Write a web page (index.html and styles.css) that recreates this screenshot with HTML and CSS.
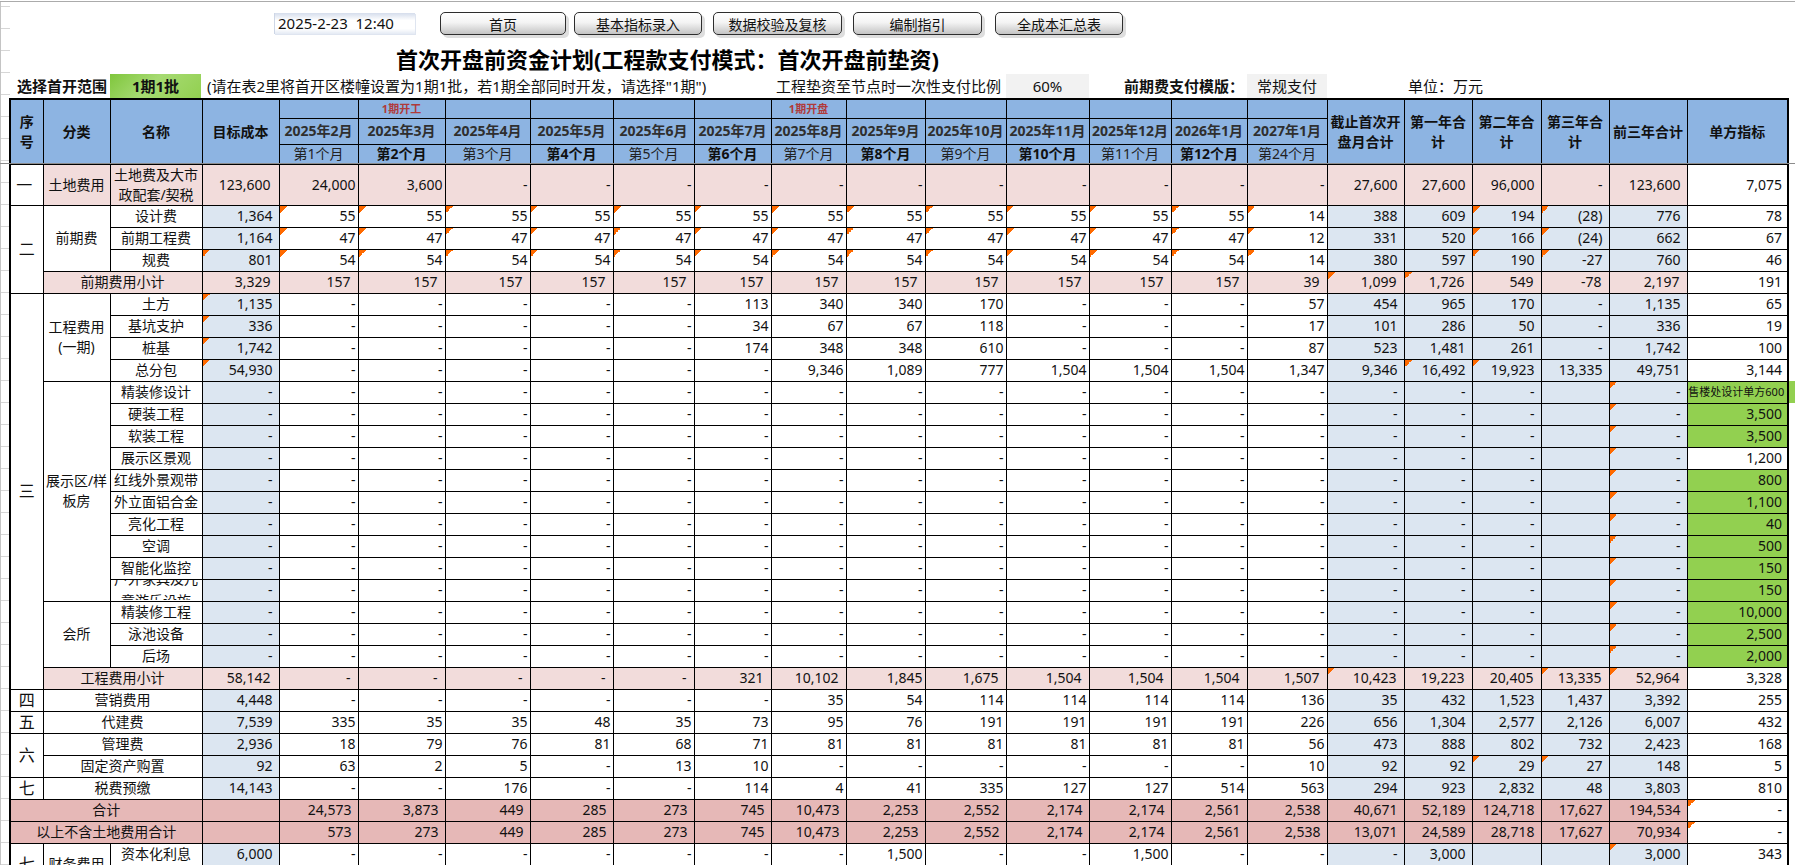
FILE: index.html
```html
<!DOCTYPE html>
<html lang="zh-CN">
<head>
<meta charset="utf-8">
<title>首次开盘前资金计划</title>
<link rel="stylesheet" href="styles.css">
</head>
<body>
<div class="ruler"></div>
<div class="pane-line"></div>
<div class="sheet">
<div class="gutter"></div>
<main class="main">
<div class="toolbar">
<div class="datebox">2025-2-23  12:40</div>
<button class="btn w1">首页</button>
<button class="btn w2">基本指标录入</button>
<button class="btn w3">数据校验及复核</button>
<button class="btn w3">编制指引</button>
<button class="btn w4">全成本汇总表</button>
</div>
<h1 class="title">首次开盘前资金计划(工程款支付模式：首次开盘前垫资)</h1>
<div class="info">
<div class="strong center">选择首开范围</div>
<div class="pick strong center">1期1批</div>
<div class="note">(请在表2里将首开区楼幢设置为1期1批，若1期全部同时开发，请选择"1期")</div>
<div>工程垫资至节点时一次性支付比例</div>
<div class="gray center">60%</div>
<div class="strong end">前期费支付模版：</div>
<div class="gray center">常规支付</div>
<div class="unit">单位：万元</div>
</div>
<table class="grid">
<colgroup><col><col><col><col><col><col><col><col><col><col><col><col><col><col><col><col><col><col><col><col><col><col><col></colgroup>
<thead>
<tr class="h1"><th rowspan="3">序<br>号</th><th rowspan="3">分类</th><th rowspan="3">名称</th><th rowspan="3">目标成本</th><th></th><th class="mark">1期开工</th><th></th><th></th><th></th><th></th><th class="mark">1期开盘</th><th></th><th></th><th></th><th></th><th></th><th></th><th rowspan="3">截止首次开盘月合计</th><th rowspan="3">第一年合计</th><th rowspan="3">第二年合计</th><th rowspan="3">第三年合计</th><th rowspan="3">前三年合计</th><th rowspan="3">单方指标</th></tr>
<tr class="h2"><th class="ym">2025年2月</th><th class="ym">2025年3月</th><th class="ym">2025年4月</th><th class="ym">2025年5月</th><th class="ym">2025年6月</th><th class="ym">2025年7月</th><th class="ym">2025年8月</th><th class="ym">2025年9月</th><th class="ym">2025年10月</th><th class="ym">2025年11月</th><th class="ym">2025年12月</th><th class="ym">2026年1月</th><th class="ym">2027年1月</th></tr>
<tr class="h3"><th class="nb">第1个月</th><th>第2个月</th><th class="nb">第3个月</th><th>第4个月</th><th class="nb">第5个月</th><th>第6个月</th><th class="nb">第7个月</th><th>第8个月</th><th class="nb">第9个月</th><th>第10个月</th><th class="nb">第11个月</th><th>第12个月</th><th class="nb">第24个月</th></tr>
</thead>
<tbody>
<tr class="land tall"><td class="c w idx">一</td><td class="c">土地费用</td><td class="c">土地费及大市政配套/契税</td><td class="a">123,600</td><td>24,000</td><td>3,600</td><td>-</td><td>-</td><td>-</td><td>-</td><td>-</td><td>-</td><td>-</td><td>-</td><td>-</td><td>-</td><td>-</td><td class="k">27,600</td><td class="k">27,600</td><td class="k">96,000</td><td class="k">-</td><td class="k">123,600</td><td class="w">7,075</td></tr>

<tr><td rowspan="4" class="c idx">二</td><td rowspan="3" class="c">前期费</td><td class="c">设计费</td><td class="a b">1,364</td><td class="t">55</td><td class="t">55</td><td class="t">55</td><td class="t">55</td><td class="t">55</td><td class="t">55</td><td class="t">55</td><td class="t">55</td><td class="t">55</td><td class="t">55</td><td class="t">55</td><td class="t">55</td><td class="t">14</td><td class="b">388</td><td class="b">609</td><td class="b t">194</td><td class="b t">(28)</td><td class="b">776</td><td class="w">78</td></tr>
<tr><td class="c">前期工程费</td><td class="a b">1,164</td><td class="t">47</td><td class="t">47</td><td class="t">47</td><td class="t">47</td><td class="t">47</td><td class="t">47</td><td class="t">47</td><td class="t">47</td><td class="t">47</td><td class="t">47</td><td class="t">47</td><td class="t">47</td><td class="t">12</td><td class="b">331</td><td class="b">520</td><td class="b t">166</td><td class="b t">(24)</td><td class="b">662</td><td class="w">67</td></tr>
<tr><td class="c">规费</td><td class="a b t">801</td><td class="t">54</td><td class="t">54</td><td class="t">54</td><td class="t">54</td><td class="t">54</td><td class="t">54</td><td class="t">54</td><td class="t">54</td><td class="t">54</td><td class="t">54</td><td class="t">54</td><td class="t">54</td><td class="t">14</td><td class="b">380</td><td class="b">597</td><td class="b t">190</td><td class="b t">-27</td><td class="b">760</td><td class="w">46</td></tr>
<tr class="sub"><td colspan="2" class="c">前期费用小计</td><td class="a">3,329</td><td>157</td><td>157</td><td>157</td><td>157</td><td>157</td><td>157</td><td>157</td><td>157</td><td>157</td><td>157</td><td>157</td><td>157</td><td>39</td><td class="t">1,099</td><td class="t">1,726</td><td>549</td><td>-78</td><td>2,197</td><td class="w">191</td></tr>

<tr><td rowspan="18" class="c idx">三</td><td rowspan="4" class="c">工程费用<br>(一期)</td><td class="c">土方</td><td class="a b t">1,135</td><td>-</td><td>-</td><td>-</td><td>-</td><td>-</td><td>113</td><td>340</td><td>340</td><td>170</td><td>-</td><td>-</td><td>-</td><td>57</td><td class="b">454</td><td class="b">965</td><td class="b">170</td><td class="b">-</td><td class="b">1,135</td><td class="w">65</td></tr>
<tr><td class="c">基坑支护</td><td class="a b t">336</td><td>-</td><td>-</td><td>-</td><td>-</td><td>-</td><td>34</td><td>67</td><td>67</td><td>118</td><td>-</td><td>-</td><td>-</td><td>17</td><td class="b">101</td><td class="b">286</td><td class="b">50</td><td class="b">-</td><td class="b">336</td><td class="w">19</td></tr>
<tr><td class="c">桩基</td><td class="a b t">1,742</td><td>-</td><td>-</td><td>-</td><td>-</td><td>-</td><td>174</td><td>348</td><td>348</td><td>610</td><td>-</td><td>-</td><td>-</td><td>87</td><td class="b">523</td><td class="b">1,481</td><td class="b">261</td><td class="b">-</td><td class="b">1,742</td><td class="w">100</td></tr>
<tr><td class="c">总分包</td><td class="a b t">54,930</td><td>-</td><td>-</td><td>-</td><td>-</td><td>-</td><td>-</td><td>9,346</td><td>1,089</td><td>777</td><td>1,504</td><td>1,504</td><td>1,504</td><td>1,347</td><td class="b">9,346</td><td class="b t">16,492</td><td class="b t">19,923</td><td class="b">13,335</td><td class="b">49,751</td><td class="w">3,144</td></tr>

<tr><td rowspan="10" class="c">展示区/样<br>板房</td><td class="c">精装修设计</td><td class="a b">-</td><td>-</td><td>-</td><td>-</td><td>-</td><td>-</td><td>-</td><td>-</td><td>-</td><td>-</td><td>-</td><td>-</td><td>-</td><td>-</td><td class="b">-</td><td class="b">-</td><td class="b">-</td><td class="b"></td><td class="b t">-</td><td class="g spill">售楼处设计单方600</td></tr>
<tr><td class="c">硬装工程</td><td class="a b">-</td><td>-</td><td>-</td><td>-</td><td>-</td><td>-</td><td>-</td><td>-</td><td>-</td><td>-</td><td>-</td><td>-</td><td>-</td><td>-</td><td class="b">-</td><td class="b">-</td><td class="b">-</td><td class="b"></td><td class="b t">-</td><td class="g">3,500</td></tr>
<tr><td class="c">软装工程</td><td class="a b">-</td><td>-</td><td>-</td><td>-</td><td>-</td><td>-</td><td>-</td><td>-</td><td>-</td><td>-</td><td>-</td><td>-</td><td>-</td><td>-</td><td class="b">-</td><td class="b">-</td><td class="b">-</td><td class="b"></td><td class="b t">-</td><td class="g">3,500</td></tr>
<tr><td class="c">展示区景观</td><td class="a b">-</td><td>-</td><td>-</td><td>-</td><td>-</td><td>-</td><td>-</td><td>-</td><td>-</td><td>-</td><td>-</td><td>-</td><td>-</td><td>-</td><td class="b">-</td><td class="b">-</td><td class="b">-</td><td class="b"></td><td class="b t">-</td><td class="w">1,200</td></tr>
<tr><td class="c">红线外景观带</td><td class="a b">-</td><td>-</td><td>-</td><td>-</td><td>-</td><td>-</td><td>-</td><td>-</td><td>-</td><td>-</td><td>-</td><td>-</td><td>-</td><td>-</td><td class="b">-</td><td class="b">-</td><td class="b">-</td><td class="b"></td><td class="b t">-</td><td class="g">800</td></tr>
<tr><td class="c">外立面铝合金</td><td class="a b">-</td><td>-</td><td>-</td><td>-</td><td>-</td><td>-</td><td>-</td><td>-</td><td>-</td><td>-</td><td>-</td><td>-</td><td>-</td><td>-</td><td class="b">-</td><td class="b">-</td><td class="b">-</td><td class="b"></td><td class="b t">-</td><td class="g">1,100</td></tr>
<tr><td class="c">亮化工程</td><td class="a b">-</td><td>-</td><td>-</td><td>-</td><td>-</td><td>-</td><td>-</td><td>-</td><td>-</td><td>-</td><td>-</td><td>-</td><td>-</td><td>-</td><td class="b">-</td><td class="b">-</td><td class="b">-</td><td class="b"></td><td class="b t">-</td><td class="g">40</td></tr>
<tr><td class="c">空调</td><td class="a b">-</td><td>-</td><td>-</td><td>-</td><td>-</td><td>-</td><td>-</td><td>-</td><td>-</td><td>-</td><td>-</td><td>-</td><td>-</td><td>-</td><td class="b">-</td><td class="b">-</td><td class="b">-</td><td class="b"></td><td class="b t">-</td><td class="g">500</td></tr>
<tr><td class="c">智能化监控</td><td class="a b">-</td><td>-</td><td>-</td><td>-</td><td>-</td><td>-</td><td>-</td><td>-</td><td>-</td><td>-</td><td>-</td><td>-</td><td>-</td><td>-</td><td class="b">-</td><td class="b">-</td><td class="b">-</td><td class="b"></td><td class="b t">-</td><td class="g">150</td></tr>
<tr><td class="c"><div class="clip">户外家具及儿童游乐设施</div></td><td class="a b">-</td><td>-</td><td>-</td><td>-</td><td>-</td><td>-</td><td>-</td><td>-</td><td>-</td><td>-</td><td>-</td><td>-</td><td>-</td><td>-</td><td class="b">-</td><td class="b">-</td><td class="b">-</td><td class="b"></td><td class="b t">-</td><td class="g">150</td></tr>

<tr><td rowspan="3" class="c">会所</td><td class="c">精装修工程</td><td class="a b">-</td><td>-</td><td>-</td><td>-</td><td>-</td><td>-</td><td>-</td><td>-</td><td>-</td><td>-</td><td>-</td><td>-</td><td>-</td><td>-</td><td class="b">-</td><td class="b">-</td><td class="b">-</td><td class="b"></td><td class="b t">-</td><td class="g">10,000</td></tr>
<tr><td class="c">泳池设备</td><td class="a b">-</td><td>-</td><td>-</td><td>-</td><td>-</td><td>-</td><td>-</td><td>-</td><td>-</td><td>-</td><td>-</td><td>-</td><td>-</td><td>-</td><td class="b">-</td><td class="b">-</td><td class="b">-</td><td class="b"></td><td class="b t">-</td><td class="g">2,500</td></tr>
<tr><td class="c">后场</td><td class="a b">-</td><td>-</td><td>-</td><td>-</td><td>-</td><td>-</td><td>-</td><td>-</td><td>-</td><td>-</td><td>-</td><td>-</td><td>-</td><td>-</td><td class="b">-</td><td class="b">-</td><td class="b">-</td><td class="b"></td><td class="b t">-</td><td class="g">2,000</td></tr>
<tr class="sub"><td colspan="2" class="c">工程费用小计</td><td class="a">58,142</td><td>-</td><td>-</td><td>-</td><td>-</td><td>-</td><td>321</td><td>10,102</td><td class="tight">1,845</td><td>1,675</td><td>1,504</td><td>1,504</td><td>1,504</td><td>1,507</td><td class="t">10,423</td><td>19,223</td><td>20,405</td><td class="t">13,335</td><td class="t">52,964</td><td class="w">3,328</td></tr>

<tr><td class="c idx">四</td><td colspan="2" class="c">营销费用</td><td class="a b">4,448</td><td>-</td><td>-</td><td>-</td><td>-</td><td>-</td><td>-</td><td>35</td><td>54</td><td>114</td><td>114</td><td>114</td><td>114</td><td>136</td><td class="b">35</td><td class="b">432</td><td class="b">1,523</td><td class="b">1,437</td><td class="b">3,392</td><td class="w">255</td></tr>
<tr><td class="c idx">五</td><td colspan="2" class="c">代建费</td><td class="a b">7,539</td><td>335</td><td>35</td><td>35</td><td>48</td><td>35</td><td>73</td><td>95</td><td>76</td><td>191</td><td>191</td><td>191</td><td>191</td><td>226</td><td class="b">656</td><td class="b">1,304</td><td class="b">2,577</td><td class="b">2,126</td><td class="b">6,007</td><td class="w">432</td></tr>
<tr><td rowspan="2" class="c idx">六</td><td colspan="2" class="c">管理费</td><td class="a b">2,936</td><td>18</td><td>79</td><td>76</td><td>81</td><td>68</td><td>71</td><td>81</td><td>81</td><td>81</td><td>81</td><td>81</td><td>81</td><td>56</td><td class="b">473</td><td class="b">888</td><td class="b">802</td><td class="b">732</td><td class="b">2,423</td><td class="w">168</td></tr>
<tr><td colspan="2" class="c">固定资产购置</td><td class="a b">92</td><td>63</td><td>2</td><td>5</td><td>-</td><td>13</td><td>10</td><td>-</td><td>-</td><td>-</td><td>-</td><td>-</td><td>-</td><td>10</td><td class="b">92</td><td class="b">92</td><td class="b t">29</td><td class="b t">27</td><td class="b">148</td><td class="w">5</td></tr>
<tr><td class="c idx">七</td><td colspan="2" class="c">税费预缴</td><td class="a b">14,143</td><td>-</td><td>-</td><td>176</td><td>-</td><td>-</td><td>114</td><td>4</td><td>41</td><td>335</td><td>127</td><td>127</td><td>514</td><td>563</td><td class="b">294</td><td class="b">923</td><td class="b">2,832</td><td class="b">48</td><td class="b">3,803</td><td class="w">810</td></tr>
<tr class="tot"><td colspan="3" class="c">合计</td><td class="a"></td><td>24,573</td><td>3,873</td><td>449</td><td>285</td><td>273</td><td>745</td><td>10,473</td><td>2,253</td><td>2,552</td><td>2,174</td><td>2,174</td><td>2,561</td><td>2,538</td><td>40,671</td><td>52,189</td><td>124,718</td><td>17,627</td><td>194,534</td><td class="w t">-</td></tr>
<tr class="tot"><td colspan="3" class="c">以上不含土地费用合计</td><td class="a"></td><td>573</td><td>273</td><td>449</td><td>285</td><td>273</td><td>745</td><td>10,473</td><td>2,253</td><td>2,552</td><td>2,174</td><td>2,174</td><td>2,561</td><td>2,538</td><td>13,071</td><td>24,589</td><td>28,718</td><td>17,627</td><td>70,934</td><td class="w t">-</td></tr>
<tr><td rowspan="2" class="c idx">七</td><td rowspan="2" class="c">财务费用</td><td class="c">资本化利息</td><td class="a b">6,000</td><td>-</td><td>-</td><td>-</td><td>-</td><td>-</td><td>-</td><td>-</td><td>1,500</td><td>-</td><td>-</td><td>1,500</td><td>-</td><td>-</td><td class="b">-</td><td class="b">3,000</td><td class="b"></td><td class="b"></td><td class="b t">3,000</td><td class="w">343</td></tr>
<tr><td class="c"></td><td class="a b"></td><td></td><td></td><td></td><td></td><td></td><td></td><td></td><td></td><td></td><td></td><td></td><td></td><td></td><td class="b"></td><td class="b"></td><td class="b"></td><td class="b"></td><td class="b"></td><td class="w"></td></tr>
</tbody>
</table>
</main>
</div>
</body>
</html>
```
FILE: styles.css
```css
* { box-sizing: border-box; }
html, body { margin: 0; padding: 0; }
body {
  width: 1795px;
  height: 865px;
  overflow: hidden;
  position: relative;
  background: #fff;
  color: #111;
  font-family: "Noto Sans", "Noto Sans CJK SC", sans-serif;
  font-size: 14px;
}
.ruler { height: 2px; border-bottom: 1px solid #ababab; }
.pane-line {
  position: absolute;
  left: 0; right: 0; top: 163px;
  height: 1px;
  background: #8c8c8c;
  z-index: 2;
}
.sheet { display: flex; align-items: flex-start; height: 863px; }
.gutter {
  flex: 0 0 10px;
  height: 100%;
  border-left: 1px solid #c4c4c4;
  background: repeating-linear-gradient(#d6d6d6 0 1px, transparent 1px 22px) 0 4px;
}
.main { flex: 1; min-width: 0; }

.toolbar { display: flex; align-items: center; height: 23px; margin-top: 10px; padding-left: 264px; }
.datebox {
  width: 141px; height: 21px; margin-right: 25px;
  padding-left: 4px; font-size: 15px; line-height: 20px; white-space: pre;
  background: linear-gradient(180deg, #d5ddec 0, #fff 35%, #fff 75%, #e4eaf4 100%);
  box-shadow: inset 1px 0 0 #cdd6e6, 1px 1px 0 #dfe5f0;
}
.btn {
  height: 23px; margin-right: 8px; padding: 2px 0 0;
  border: 1px solid #2e2e2e; border-radius: 5px;
  background: linear-gradient(180deg, #fff 0, #f4f4f4 45%, #c4c4c4 100%);
  box-shadow: 3px 3px 0 #dedede;
  font: inherit; font-size: 14px; line-height: 18px; color: #111;
}
.w1 { width: 126px; }
.w2 { width: 128px; margin-right: 11px; }
.w3 { width: 129px; margin-right: 11px; }
.w4 { width: 128px; margin-left: 2px; }

.title {
  margin: 9px 0 0;
  height: 30px;
  padding-left: 386px;
  font-size: 22px; font-weight: 700; line-height: 30px; color: #000;
  white-space: nowrap;
}
.info {
  display: grid;
  grid-template-columns: 100px 91px 575px 230px 83px 158px 80px 1fr;
  height: 24px;
  font-size: 15px;
  line-height: 24px;
  white-space: nowrap;
}
.strong { font-weight: 700; }
.center { text-align: center; }
.info > .center:first-child { padding-left: 4px; }
.end { text-align: right; padding-right: 3px; }
.note { padding-left: 6px; }
.pick { background: linear-gradient(135deg, #7fc63c 0, #a6da72 45%, #92d050 100%); }
.gray { background: #f2f2f2; }
.unit { padding-left: 81px; }

.grid {
  table-layout: fixed;
  border-collapse: collapse;
  width: 1778px;
  margin-left: -1px;
  border: 2px solid #000;
  line-height: 20px;
}
col:nth-child(1) { width: 33px; }
col:nth-child(2) { width: 67px; }
col:nth-child(3) { width: 92px; }
col:nth-child(4) { width: 77px; }
col:nth-child(5) { width: 79px; }
col:nth-child(6) { width: 87px; }
col:nth-child(7) { width: 85px; }
col:nth-child(8) { width: 83px; }
col:nth-child(9) { width: 81px; }
col:nth-child(10) { width: 77px; }
col:nth-child(11) { width: 75px; }
col:nth-child(12) { width: 79px; }
col:nth-child(13) { width: 81px; }
col:nth-child(14) { width: 83px; }
col:nth-child(15) { width: 82px; }
col:nth-child(16) { width: 76px; }
col:nth-child(17) { width: 80px; }
col:nth-child(18) { width: 77px; }
col:nth-child(19) { width: 68px; }
col:nth-child(20) { width: 69px; }
col:nth-child(21) { width: 68px; }
col:nth-child(22) { width: 78px; }
col:nth-child(23) { width: 101px; }

tr { height: 22px; }
tr.h1 { height: 19px; }
tr.h2 { height: 26px; }
tr.h3 { height: 20px; }
tr.tall { height: 41px; }

th, td { border: 1px solid #000; padding: 0; white-space: nowrap; overflow: hidden; }
th {
  background: #8db4e2;
  font-size: 14px; font-weight: 700; color: #111;
  line-height: 20px;
  white-space: normal;
}
th.ym { color: #2f2f2f; white-space: nowrap; }
th.nb { font-weight: 400; color: #222; }
.h3 th { line-height: 18px; white-space: nowrap; }
.h1 th.mark { font-size: 11px; color: #b03a3a; line-height: 16px; }

td { text-align: right; padding-right: 2px; padding-bottom: 1px; font-size: 14px; }
.tall td { padding-bottom: 0; }
td.c { text-align: center; padding-right: 0; white-space: normal; }
td.idx { font-size: 16px; }
td.a { padding-right: 8px; }
td.b { background: #dce6f1; padding-right: 6px; }
td.k { padding-right: 6px; }
td.w { background: #fff; padding-right: 5px; }
td.g { background: #92d050; padding-right: 5px; }
td.spill { font-size: 11px; padding-right: 2px; text-align: center; box-shadow: 8px 0 0 #92d050; overflow: visible; }
.land td { background: #f2dcdb; }
.sub td { background: #f2dcdb; padding-right: 7px; }
.tot td { background: #e6b8b7; padding-right: 6px; }
.land td.w, .sub td.w, .tot td.w { background-color: #fff; padding-right: 5px; }
.sub td.a { padding-right: 8px; }
.sub td.c, .tot td.c { padding-right: 0; }
.sub td.tight { padding-right: 2px; }
td.t {
  background-image: linear-gradient(135deg, #ff6a00 50%, transparent 50%);
  background-size: 7px 7px;
  background-repeat: no-repeat;
}
.clip {
  height: 20px; overflow: hidden;
  display: flex; align-items: center; justify-content: center;
  line-height: 22px;
  white-space: normal;
}
```
